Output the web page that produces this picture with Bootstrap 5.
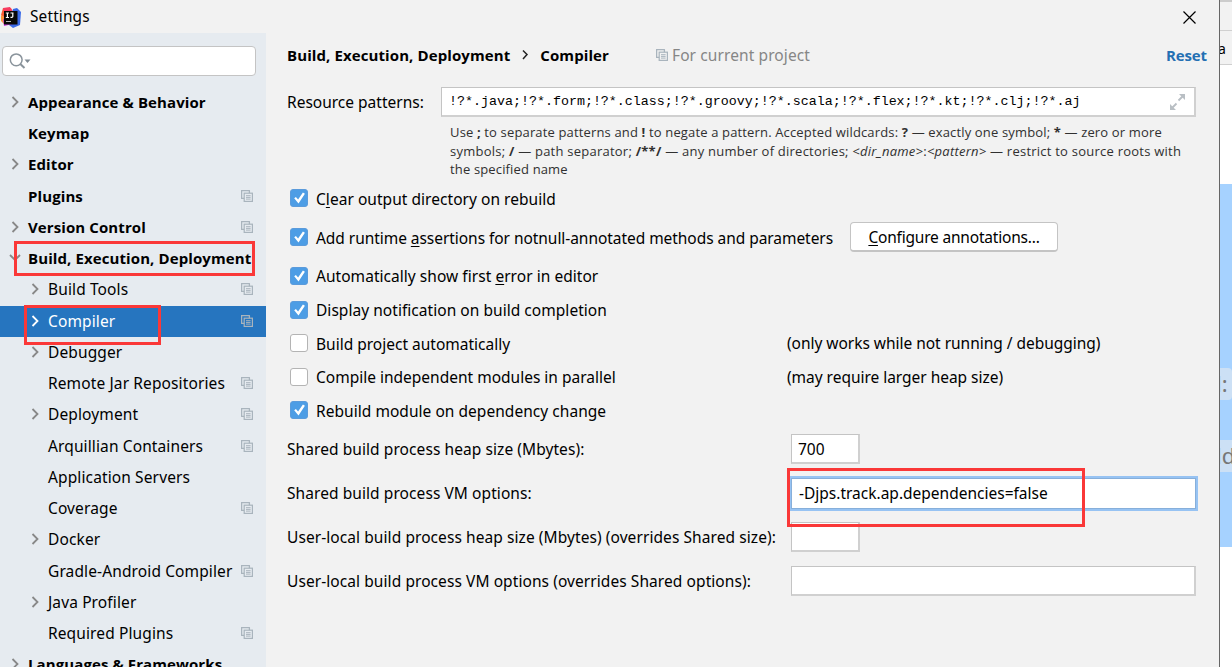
<!DOCTYPE html>
<html lang="en">
<head>
<meta charset="utf-8">
<title>Settings</title>
<link rel="stylesheet" href="https://cdn.jsdelivr.net/npm/bootstrap@5.3.0/dist/css/bootstrap.min.css">
<script src="https://cdn.jsdelivr.net/npm/bootstrap@5.3.0/dist/js/bootstrap.bundle.min.js"></script>
<style>
body{font-family:"Noto Sans","Open Sans",sans-serif;font-size:15.5px;line-height:20px;color:#000;background:#fff;width:1232px;height:667px}
.dialog{width:1220px;background:#f2f2f2;border-right:1px solid #666}
.titlebar{height:34px;padding-top:1px}
.titlebar .caption{font-size:15.4px;letter-spacing:.15px;padding-left:9px}
.titlebar .close-icon{margin-right:23px}
.side{width:266px;background:#e6ebf0;flex:none}
.search{margin:13px 10px 10.75px 2px;height:30px;border:1px solid #c4c4c4;border-radius:4px;background:#fff;padding-left:6px}
.item{height:31.25px;flex:none;padding-right:13px;padding-bottom:1.5px}
.item .arrow{width:20px;margin-left:8px;flex:none;display:flex}
.item.sub{letter-spacing:.12px}
.item.sub .arrow{margin-left:28px}
.item .arrow svg{margin-left:2px}
.item.top,.strong{font-family:"Open Sans",sans-serif;font-weight:700;font-size:15px;letter-spacing:.1px}
.item.sel{background:#2675bf;color:#fff}
.item svg,.crumb svg{flex:none}
.main-pane{padding-left:21px}
.crumb{height:43px}
.crumb svg.ms-5{margin-left:47px!important}
.pattern-row{height:42px;margin-top:5px}
.pattern-row label{width:154px}
.field{background:#fff;border:1px solid #c4c4c4;border-right:2px solid #d0d0d0;border-bottom:2px solid #d0d0d0;height:30px}
.pattern{width:755px;font-family:"Liberation Mono",monospace;font-size:13.34px;letter-spacing:-.005px;padding:0 7px}
.help{padding-left:163px;height:56px;font:13px/18.5px "Open Sans",sans-serif;letter-spacing:.15px;color:#303030;white-space:nowrap}
.help .long-line{letter-spacing:.235px}
.check-row{gap:8px;padding-left:3px;letter-spacing:.04px}
.box{width:18px;height:18px;border-radius:3px;background:#4d9de5;border:1px solid #5b9bdb;margin-top:-1px;flex:none;display:flex}
.box.off{background:#fff;border-color:#b4b4b4}
.h39{height:39px}.h36{height:36px;padding-top:2px}.h34{height:34px}.h33{height:33px}
.col-a{width:500px;padding-left:3px;gap:8px}
.note{letter-spacing:-.03px;padding-bottom:1px}
.wide{width:517px;white-space:nowrap;letter-spacing:-.05px}
.config{height:30px;width:208px;border:1px solid #c4c4c4;border-bottom-width:2px;border-radius:4px;background:#fff;margin-left:9px;margin-top:-1px;letter-spacing:-.2px;color:#000;font-size:15.500px;line-height:20px;white-space:nowrap}
.form-line{height:44px}
.form-line label{width:504px;white-space:nowrap;letter-spacing:.075px}
.short{width:69px;padding-left:6px}
.long{width:405px;padding-left:7px}
.focus{border:1px solid #87afda;box-shadow:0 0 0 2px #97c3f3;height:31px;width:405px}
u{text-underline-offset:2px;text-decoration-thickness:1px}
.text-for{color:#868686;letter-spacing:.1px}
.reset{color:#2470b3;margin-right:12px;letter-spacing:-.1px}
.mark-box{position:absolute;border:3px solid #fa3838}
.mark-a{left:14px;top:241px;width:241px;height:35px}
.mark-b{left:24px;top:305px;width:137px;height:40px}
.mark-c{left:787px;top:468px;width:298px;height:59px}
.behind{width:12px}
.behind .tool{height:31px;background:#f2f2f2;border-top:2px solid #ccc;border-bottom:1px solid #d0d0d0}
.behind .tab{height:34px;background:#f2f2f2;border-bottom:1px solid #d0d0d0;font-size:14px;line-height:36px;text-indent:-2px}
.behind .code{height:363px;margin-top:119px;background:#a6d2ff;padding-top:184px;color:#777}
.behind .hint{height:32px;background:#cce0f5;margin-bottom:40px;font-size:22px;line-height:31px;white-space:nowrap;border-radius:0 4px 4px 0;text-indent:-4px}
.behind .hint.cut{border-radius:0}
</style>
</head>
<body class="d-flex overflow-hidden position-relative">
<svg class="d-none">
  <symbol id="right" viewBox="0 0 10 14"><path d="M2.500 2l5 5-5 5" fill="none" stroke="currentColor" stroke-width="1.8"/></symbol>
  <symbol id="down" viewBox="0 0 14 10"><path d="M2 2l5 5 5-5" fill="none" stroke="currentColor" stroke-width="1.8"/></symbol>
  <symbol id="copy" viewBox="0 0 12 12"><path d="M.6 8.9V.6h8.3M.6 8.4h2.6M8.4.6v2.6" fill="none" stroke="#a9b4bd" stroke-width="1.3"/><rect x="3.2" y="3.2" width="8.2" height="8.2" fill="none" stroke="#a9b4bd" stroke-width="1.2"/><path d="M5 5.7h4.6M5 7.4h4.6M5 9.1h4.6" stroke="#a9b4bd" stroke-width="1"/></symbol>
  <symbol id="tick" viewBox="0 0 16 16"><path d="M3.2 8.2l1.7-1.3 2.2 2.7 4.8-7 2 1.2-6.4 9.6z" fill="#fff"/></symbol>
</svg>

<div class="dialog d-flex flex-column flex-shrink-0">
  <header class="titlebar d-flex align-items-center">
    <svg width="21" height="21" viewBox="0 0 21 21"><path d="M1 8L3 1h8l2 4-8 6z" fill="#fc5c34"/><path d="M3 1l7-1 3 5H4z" fill="#f83b60"/><path d="M1 14l4 4-1-8-3-2z" fill="#fb9438"/><path d="M13 2l4-1 4 4-1 13-7 3-4-3z" fill="#3b6be8"/><path d="M3 12l1 7 9-2z" fill="#c23ad8"/><rect x="4" y="4" width="13.5" height="13.5" fill="#080808"/><path d="M5.800 6h3.200M7.400 6v4.500M5.800 10.500h3.200M10.500 6h3M12.800 6v3.500q0 1-2.300.9" stroke="#fff" stroke-width="1.200" fill="none"/><path d="M6 14.500h5" stroke="#bbb"/></svg>
    <span class="caption">Settings</span>
    <svg class="close-icon ms-auto" width="13" height="13" viewBox="0 0 13 13"><path d="M.5.5l12 12M12.500.5l-12 12" stroke="#000" stroke-width="1.200"/></svg>
  </header>
  <div class="d-flex flex-grow-1 overflow-hidden">
    <nav class="side d-flex flex-column overflow-hidden">
      <div class="search d-flex align-items-center flex-shrink-0">
        <svg width="22" height="18" viewBox="0 0 22 18"><circle cx="7.200" cy="7.800" r="5.900" fill="none" stroke="#8a949c" stroke-width="1.500"/><path d="M11.300 12l4.200 4" stroke="#8a949c" stroke-width="2"/><path d="M15.500 7.500h6l-3 3.500z" fill="#7f8a93"/></svg>
      </div>
      <div class="item top d-flex align-items-center"><span class="arrow"><svg width="10" height="14" color="#888"><use href="#right"/></svg></span><span>Appearance &amp; Behavior</span></div>
      <div class="item top d-flex align-items-center"><span class="arrow"></span><span>Keymap</span></div>
      <div class="item top d-flex align-items-center"><span class="arrow"><svg width="10" height="14" color="#888"><use href="#right"/></svg></span><span>Editor</span></div>
      <div class="item top d-flex align-items-center"><span class="arrow"></span><span>Plugins</span><svg class="ms-auto" width="12" height="12"><use href="#copy"/></svg></div>
      <div class="item top d-flex align-items-center"><span class="arrow"><svg width="10" height="14" color="#888"><use href="#right"/></svg></span><span>Version Control</span><svg class="ms-auto" width="12" height="12"><use href="#copy"/></svg></div>
      <div class="item top d-flex align-items-center"><span class="arrow"><svg class="m-0" width="14" height="10" color="#888"><use href="#down"/></svg></span><span class="text-nowrap">Build, Execution, Deployment</span></div>
      <div class="item sub d-flex align-items-center"><span class="arrow"><svg width="10" height="14" color="#888"><use href="#right"/></svg></span><span>Build Tools</span><svg class="ms-auto" width="12" height="12"><use href="#copy"/></svg></div>
      <div class="item sub sel d-flex align-items-center"><span class="arrow"><svg width="10" height="14"><use href="#right"/></svg></span><span>Compiler</span><svg class="ms-auto" width="12" height="12"><use href="#copy"/></svg></div>
      <div class="item sub d-flex align-items-center"><span class="arrow"><svg width="10" height="14" color="#888"><use href="#right"/></svg></span><span>Debugger</span></div>
      <div class="item sub d-flex align-items-center"><span class="arrow"></span><span class="text-nowrap">Remote Jar Repositories</span><svg class="ms-auto" width="12" height="12"><use href="#copy"/></svg></div>
      <div class="item sub d-flex align-items-center"><span class="arrow"><svg width="10" height="14" color="#888"><use href="#right"/></svg></span><span>Deployment</span><svg class="ms-auto" width="12" height="12"><use href="#copy"/></svg></div>
      <div class="item sub d-flex align-items-center"><span class="arrow"></span><span>Arquillian Containers</span><svg class="ms-auto" width="12" height="12"><use href="#copy"/></svg></div>
      <div class="item sub d-flex align-items-center"><span class="arrow"></span><span>Application Servers</span></div>
      <div class="item sub d-flex align-items-center"><span class="arrow"></span><span>Coverage</span><svg class="ms-auto" width="12" height="12"><use href="#copy"/></svg></div>
      <div class="item sub d-flex align-items-center"><span class="arrow"><svg width="10" height="14" color="#888"><use href="#right"/></svg></span><span>Docker</span></div>
      <div class="item sub d-flex align-items-center"><span class="arrow"></span><span class="text-nowrap">Gradle-Android Compiler</span><svg class="ms-auto" width="12" height="12"><use href="#copy"/></svg></div>
      <div class="item sub d-flex align-items-center"><span class="arrow"><svg width="10" height="14" color="#888"><use href="#right"/></svg></span><span>Java Profiler</span></div>
      <div class="item sub d-flex align-items-center"><span class="arrow"></span><span>Required Plugins</span><svg class="ms-auto" width="12" height="12"><use href="#copy"/></svg></div>
      <div class="item top d-flex align-items-center"><span class="arrow"><svg width="10" height="14" color="#888"><use href="#right"/></svg></span><span class="text-nowrap">Languages &amp; Frameworks</span></div>
    </nav>

    <main class="main-pane flex-grow-1">
      <div class="crumb d-flex align-items-center">
        <span class="strong">Build, Execution, Deployment</span>
        <svg class="ms-2 me-1" width="18" height="14" viewBox="0 0 18 14"><path d="M5 2.500l4 4-4 4.500" fill="none" stroke="#222" stroke-width="1.500"/></svg>
        <span class="strong">Compiler</span>
        <svg class="ms-5" width="12" height="12"><use href="#copy"/></svg>
        <span class="text-for ms-1">For current project</span>
        <span class="strong reset ms-auto">Reset</span>
      </div>
      <div class="pattern-row d-flex align-items-center">
        <label>Resource patterns:</label>
        <div class="field pattern d-flex align-items-center justify-content-between"><span>!?*.java;!?*.form;!?*.class;!?*.groovy;!?*.scala;!?*.flex;!?*.kt;!?*.clj;!?*.aj</span>
          <svg width="18" height="16" viewBox="0 0 18 16"><path d="M10 0h6v6zM1 10v6h6z" fill="#b9bfc4"/><path d="M14 2l-4.500 4.500M3 14l4.500-4.500" stroke="#b9bfc4" stroke-width="1.800"/></svg>
        </div>
      </div>
      <div class="help">Use <b>;</b> to separate patterns and <b>!</b> to negate a pattern. Accepted wildcards: <b>?</b> — exactly one symbol; <b>*</b> — zero or more<br><span class="long-line">symbols; <b>/</b> — path separator; <b>/**/</b> — any number of directories; <i>&lt;dir_name&gt;</i>:<i>&lt;pattern&gt;</i> — restrict to source roots with</span><br>the specified name</div>

      <div class="check-row h39 d-flex align-items-center"><span class="box"><svg width="16" height="16"><use href="#tick"/></svg></span><span>C<u>l</u>ear output directory on rebuild</span></div>
      <div class="check-row h39 d-flex align-items-center"><span class="box"><svg width="16" height="16"><use href="#tick"/></svg></span><span class="wide">Add runtime <u>a</u>ssertions for notnull-annotated methods and parameters</span><button class="config btn p-0 d-flex align-items-center justify-content-center"><span><u>C</u>onfigure annotations...</span></button></div>
      <div class="check-row h36 d-flex align-items-center"><span class="box"><svg width="16" height="16"><use href="#tick"/></svg></span><span>Automatically show first <u>e</u>rror in editor</span></div>
      <div class="check-row h34 d-flex align-items-center"><span class="box"><svg width="16" height="16"><use href="#tick"/></svg></span><span>Display notification on build completion</span></div>
      <div class="h33 d-flex align-items-center"><div class="col-a d-flex align-items-center"><span class="box off"></span><span>Build project automatically</span></div><span class="note">(only works while not running / debugging)</span></div>
      <div class="h34 d-flex align-items-center"><div class="col-a d-flex align-items-center"><span class="box off"></span><span>Compile independent modules in parallel</span></div><span class="note">(may require larger heap size)</span></div>
      <div class="check-row h33 d-flex align-items-center"><span class="box"><svg width="16" height="16"><use href="#tick"/></svg></span><span>Rebuild module on dependency change</span></div>

      <div class="form-line d-flex align-items-center"><label>Shared build process heap size (Mbytes):</label><div class="field short d-flex align-items-center">700</div></div>
      <div class="form-line d-flex align-items-center"><label>Shared build process VM options:</label><div class="field long focus d-flex align-items-center">-Djps.track.ap.dependencies=false</div></div>
      <div class="form-line d-flex align-items-center"><label>User-local build process heap size (Mbytes) (overrides Shared size):</label><div class="field short"></div></div>
      <div class="form-line d-flex align-items-center"><label>User-local build process VM options (overrides Shared options):</label><div class="field long"></div></div>
    </main>
  </div>
</div>

<aside class="behind flex-shrink-0 overflow-hidden">
  <div class="tool"></div>
  <div class="tab">a</div>
  <div class="code"><div class="hint">l:</div><div class="hint cut">ld</div></div>
</aside>

<div class="mark-box mark-a"></div>
<div class="mark-box mark-b"></div>
<div class="mark-box mark-c"></div>
</body>
</html>
